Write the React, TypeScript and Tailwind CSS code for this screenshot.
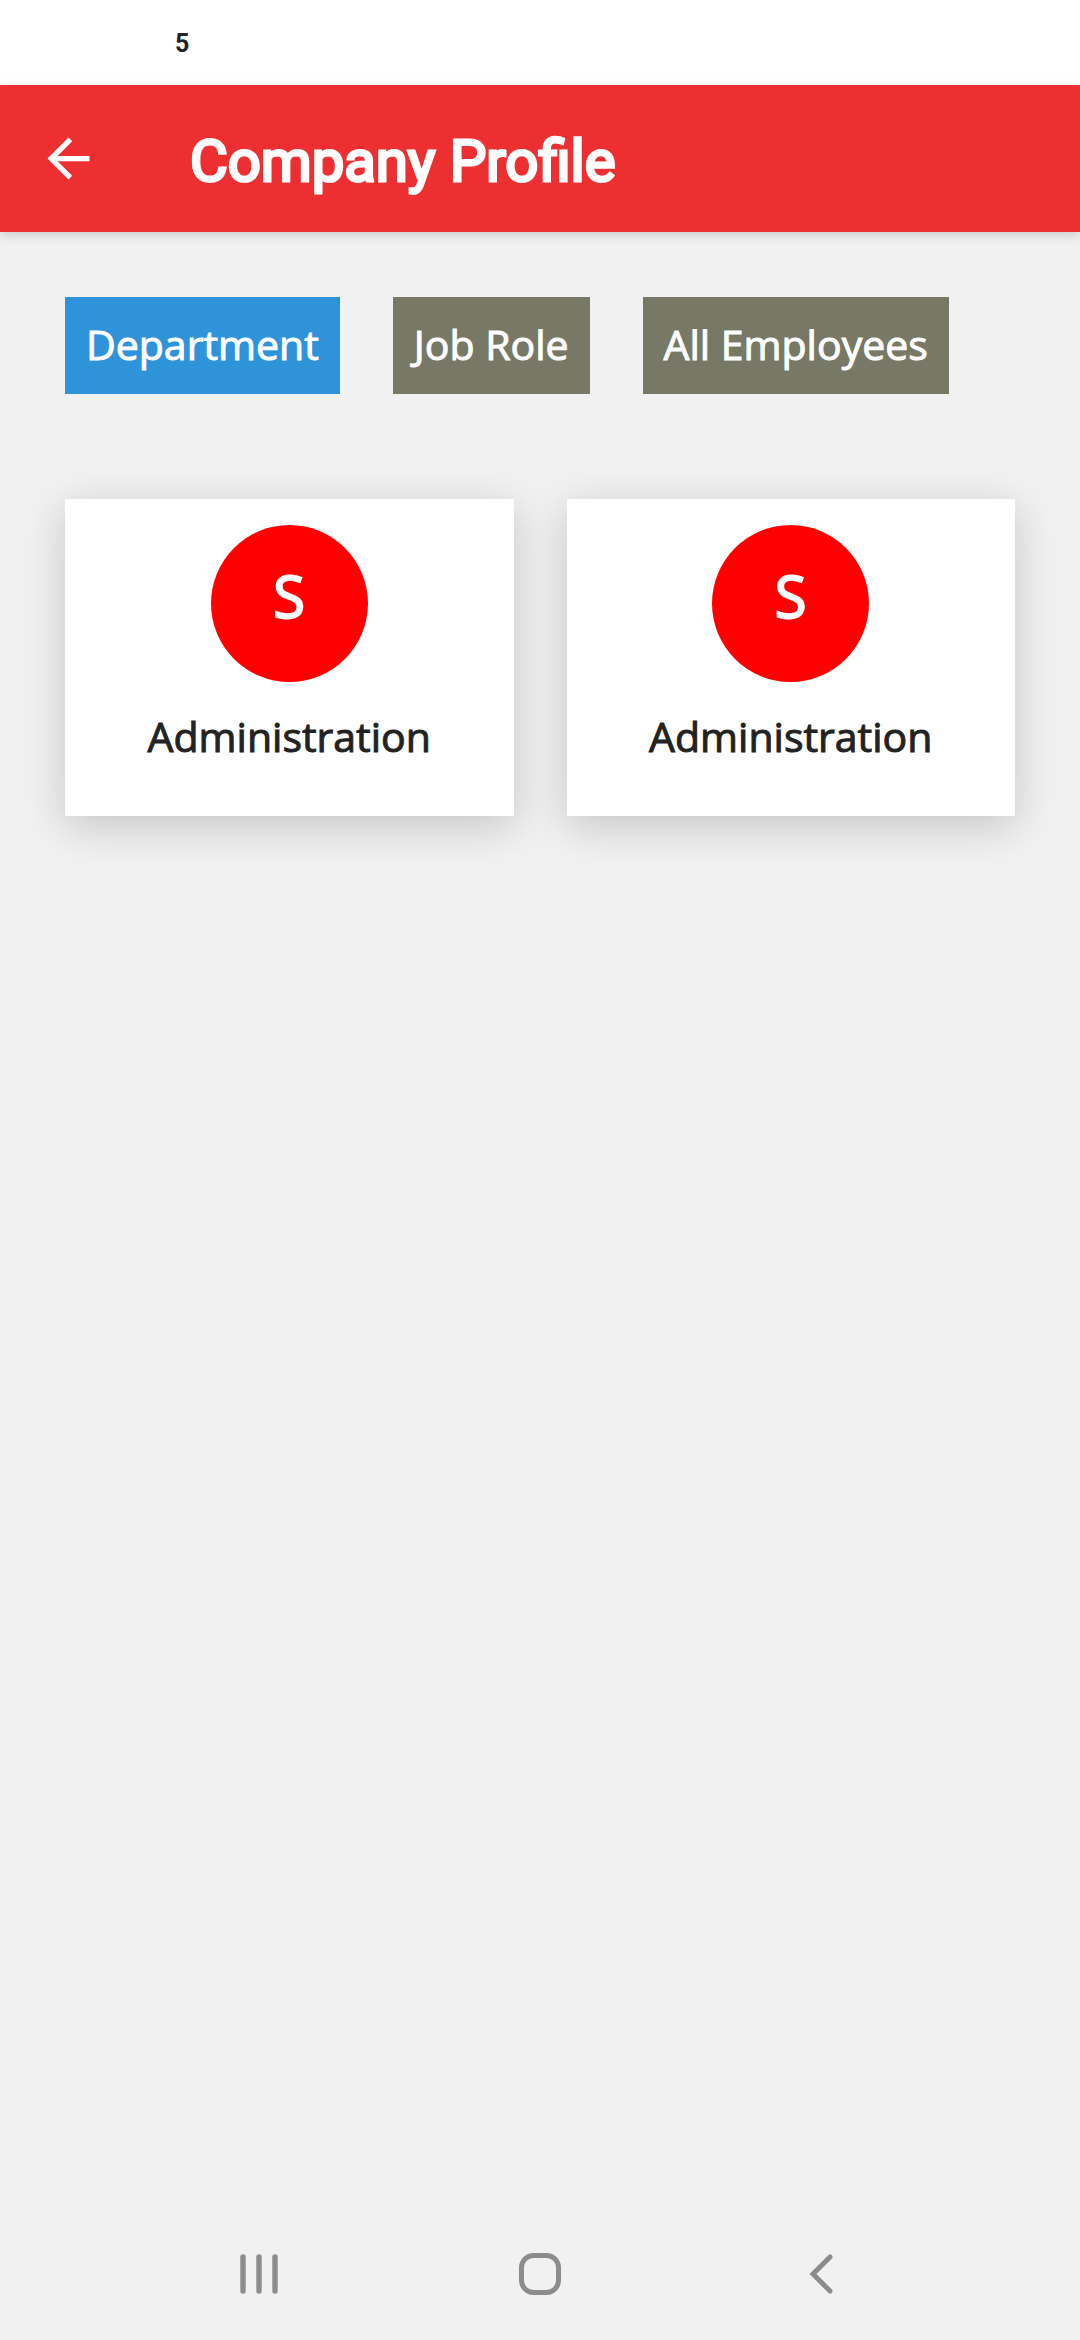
const tabs = [
  { label: 'Department', active: true },
  { label: 'Job Role', active: false },
  { label: 'All Employees', active: false },
];

const departments = [
  { id: 1, initial: 'S', name: 'Administration' },
  { id: 2, initial: 'S', name: 'Administration' },
];

function StatusBar() {
  return (
    <div className="flex h-[85px] items-center bg-white px-[175px] pt-[3px] font-['Roboto',sans-serif] text-[25px] font-bold text-[#222222]">
      5
    </div>
  );
}

function Header() {
  return (
    <header className="flex h-[147px] items-center gap-[90px] bg-[#ee2f32] px-[37px] text-white shadow-[0_3px_10px_rgba(0,0,0,0.16)]">
      <button type="button" aria-label="Back">
        <svg viewBox="0 0 24 24" className="size-[63px]" fill="currentColor" aria-hidden="true">
          <path d="M20 11H7.83l5.59-5.59L12 4l-8 8 8 8 1.41-1.41L7.83 13H20v-2z" />
        </svg>
      </button>
      <h1 className="pt-1 font-['Roboto',sans-serif] text-[58px] leading-[72px] font-normal [-webkit-text-stroke:3px_currentColor]">Company Profile</h1>
    </header>
  );
}

function DepartmentCard({ initial, name }: { initial: string; name: string }) {
  return (
    <article className="flex flex-col items-center bg-white pt-[26px] pb-[50px] shadow-[0_10px_40px_rgba(0,0,0,0.18)]">
      <div className="flex size-[157px] items-center justify-center rounded-full bg-[#ff0000] pb-4 text-[58px] leading-[80px] text-white [-webkit-text-stroke:2px_currentColor]">
        {initial}
      </div>
      <h2 className="mt-6 text-[41px] leading-[60px] text-[#222222] [-webkit-text-stroke:1px_currentColor]">{name}</h2>
    </article>
  );
}

function NavigationBar() {
  return (
    <nav className="flex h-[132px] items-center justify-around px-[118px] text-[#8c8c8c]">
      <button type="button" aria-label="Recent apps">
        <svg viewBox="0 0 48 48" className="size-12" fill="none" stroke="currentColor" strokeWidth="5.4" strokeLinecap="round" aria-hidden="true">
          <path d="M8 7v34M24 7v34M40 7v34" />
        </svg>
      </button>
      <button type="button" aria-label="Home">
        <svg viewBox="0 0 48 48" className="size-12" fill="none" stroke="currentColor" strokeWidth="5" aria-hidden="true">
          <rect x="5.5" y="5.5" width="37" height="37" rx="12" />
        </svg>
      </button>
      <button type="button" aria-label="Back">
        <svg viewBox="0 0 48 48" className="size-12" fill="none" stroke="currentColor" strokeWidth="5" strokeLinecap="round" aria-hidden="true">
          <path d="M33 7L16 24l17 17" />
        </svg>
      </button>
    </nav>
  );
}

export default function App() {
  return (
    <div className="flex min-h-screen flex-col bg-[#f1f1f1] font-['Open_Sans',sans-serif]">
      <StatusBar />
      <Header />
      <main className="flex-1 px-[65px] pt-[65px]">
        <div className="flex flex-wrap gap-[53px]">
          {tabs.map((tab) => (
            <button
              key={tab.label}
              type="button"
              aria-pressed={tab.active}
              className={`h-[97px] px-[21px] pb-[3px] text-[41px] leading-[60px] text-white [-webkit-text-stroke:1px_currentColor] ${tab.active ? 'bg-[#2f93da]' : 'bg-[#777865]'}`}
            >
              {tab.label}
            </button>
          ))}
        </div>
        <div className="mt-[105px] grid grid-cols-2 gap-[53px]">
          {departments.map((d) => (
            <DepartmentCard key={d.id} initial={d.initial} name={d.name} />
          ))}
        </div>
      </main>
      <NavigationBar />
    </div>
  );
}
